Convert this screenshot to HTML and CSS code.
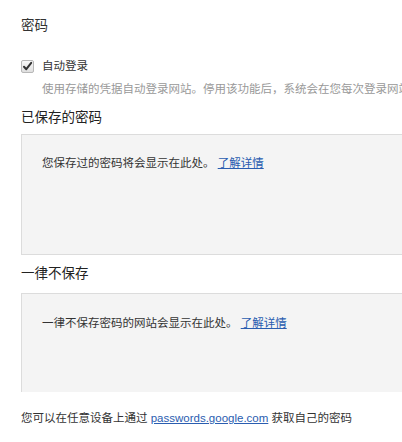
FILE: index.html
```html
<!DOCTYPE html>
<html lang="zh-CN">
<head>
<meta charset="utf-8">
<title>密码</title>
<link rel="stylesheet" href="styles.css">
</head>
<body>
<div class="page">
  <h2 class="title">密码</h2>
  <label class="check-row">
    <span class="checkbox">
      <svg width="13" height="13" viewBox="0 0 13 13">
        <defs>
          <linearGradient id="cbg" x1="0" y1="0" x2="0" y2="1">
            <stop offset="0" stop-color="#fafafa"/>
            <stop offset="1" stop-color="#dedede"/>
          </linearGradient>
        </defs>
        <rect x="0.5" y="0.5" width="12" height="12" rx="1.5" fill="url(#cbg)" stroke="#b8b8b8"/>
        <path d="M3 6.8 L5.3 9.2 L10.2 2.8" fill="none" stroke="#333" stroke-width="2" stroke-linecap="round" stroke-linejoin="round"/>
      </svg>
    </span>
    <span class="check-label">自动登录</span>
  </label>
  <p class="desc">使用存储的凭据自动登录网站。停用该功能后，系统会在您每次登录网站前请求您进行验证。</p>

  <h3 class="section-title">已保存的密码</h3>
  <div class="list-box saved">
    <p class="empty">您保存过的密码将会显示在此处。 <a href="#" class="link">了解详情</a></p>
  </div>

  <h3 class="section-title second">一律不保存</h3>
  <div class="list-box never">
    <p class="empty">一律不保存密码的网站会显示在此处。 <a href="#" class="link">了解详情</a></p>
  </div>

  <p class="footer">您可以在任意设备上通过 <a href="#" class="link">passwords.google.com</a> 获取自己的密码</p>
</div>
</body>
</html>
```

FILE: styles.css
```css
html, body {
  margin: 0;
  padding: 0;
  background: #fff;
  overflow: hidden;
}

body {
  font-family: "Liberation Sans", "Noto Sans CJK SC", "Noto Sans", sans-serif;
  color: #333;
}

.page {
  width: 640px;
  padding-left: 21px;
  display: flex;
  flex-direction: column;
}

.title {
  margin: 16px 0 0;
  font-size: 13.5px;
  font-weight: normal;
  line-height: 20px;
  color: #333;
}

.check-row {
  margin-top: 22px;
  display: flex;
  align-items: center;
  height: 16px;
  font-size: 11.5px;
  line-height: 16px;
  color: #333;
}

.checkbox {
  width: 13px;
  height: 13px;
  display: flex;
}

.check-label {
  margin-left: 8px;
}

.desc {
  margin: 7px 0 0 21px;
  font-size: 11.5px;
  line-height: 16px;
  color: #999;
  white-space: nowrap;
}

.section-title {
  margin: 11px 0 0;
  font-size: 13.5px;
  font-weight: normal;
  line-height: 20px;
  color: #222;
}

.section-title.second {
  margin-top: 9px;
}

.list-box {
  margin-top: 6px;
  width: 560px;
  background: #f4f4f4;
  border: 1px solid #dcdcdc;
  box-sizing: border-box;
  padding: 20px 20px 0;
}

.list-box.saved {
  height: 121px;
}

.list-box.never {
  margin-top: 9px;
  height: 99px;
  border-bottom: none;
  padding-top: 21px;
}

.empty {
  margin: 0;
  font-size: 11.5px;
  line-height: 16px;
  color: #333;
  white-space: nowrap;
}

.link {
  color: #2a5db0;
  text-decoration: underline;
}

.footer {
  margin: 18px 0 0;
  font-size: 11.5px;
  line-height: 16px;
  color: #333;
  white-space: nowrap;
}
```
